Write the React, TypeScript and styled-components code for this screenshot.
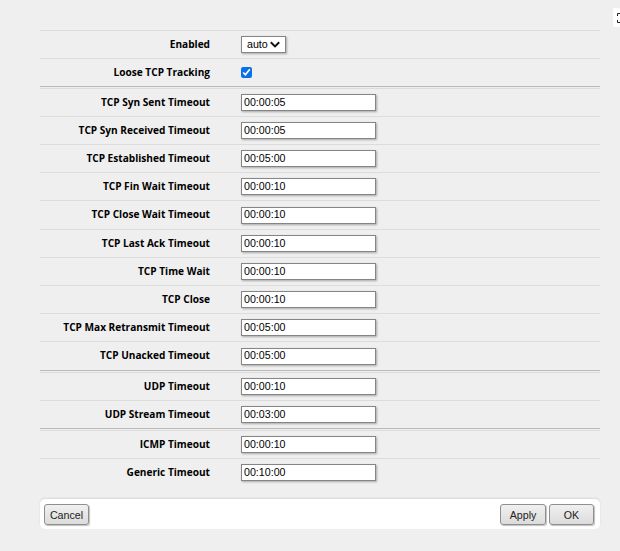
import React from "react";
import styled, { createGlobalStyle } from "styled-components";

const chevron = encodeURIComponent(
  '<svg xmlns="http://www.w3.org/2000/svg" width="10" height="7" viewBox="0 0 10 7"><path d="M.8 1.2L5 5.4l4.2-4.2" fill="none" stroke="#111" stroke-width="2"/></svg>'
);

const Global = createGlobalStyle`
  html, body { margin: 0; padding: 0; background: #efefef; }
  body { width: 620px; height: 551px; overflow: hidden; font-family: "Liberation Sans", Arial, sans-serif; }
`;
const Page = styled.div`
  position: relative;
  width: 620px;
  height: 551px;
  padding: 30px 20px 0 40px;
  box-sizing: border-box;
`;
const Separator = styled.div`
  height: 2px;
  box-sizing: border-box;
  border-top: 1px solid #b9b9b9;
`;
const Row = styled.div<{ $h: number }>`
  display: grid;
  grid-template-columns: 170px 1fr;
  column-gap: 31px;
  align-items: center;
  height: ${(p) => p.$h}px;
  box-sizing: border-box;
  border-top: 1px solid #dcdcdc;
`;
const Label = styled.label`
  text-align: right;
  font: bold 10.1px/12px "Open Sans", sans-serif;
  padding-bottom: 2px;
  color: #000;
`;
const TextInput = styled.input`
  display: block;
  width: 135px;
  height: 17px;
  box-sizing: border-box;
  border: 1px solid #858585;
  background: #fff;
  padding: 0 2px 2px;
  margin: 0;
  font: 10.67px "Liberation Sans", Arial, sans-serif;
  color: #000;
  box-shadow: 1px 1px 2px rgba(0,0,0,.3);
`;
const Select = styled.select`
  display: block;
  appearance: none;
  width: 45px;
  height: 17px;
  box-sizing: border-box;
  border: 1px solid #858585;
  border-radius: 0;
  background: #fff url("data:image/svg+xml,${chevron}") no-repeat right 5px center;
  font: 10.67px "Liberation Sans", Arial, sans-serif;
  color: #000;
  box-shadow: 1px 1px 2px rgba(0,0,0,.3);
  padding: 0 0 2px 5px;
  margin: 0;
`;
const Check = styled.input`
  display: block;
  width: 11px;
  height: 11px;
  margin: 0;
  accent-color: #0a6fe8;
`;
const Footer = styled.div`
  display: flex;
  align-items: center;
  gap: 3px;
  height: 30px;
  margin-top: 13px;
  padding: 0 6px 0 4px;
  background: #fff;
  border-radius: 5px;
  box-shadow: 0 -1px 2px rgba(0,0,0,.1);
`;
const Button = styled.button<{ $push?: boolean; $w: number }>`
  width: ${(p) => p.$w}px;
  height: 21px;
  ${(p) => (p.$push ? "margin-left: auto;" : "")}
  border: 1px solid #8f8f8f;
  border-radius: 3px;
  background: linear-gradient(#f0f0f0, #dcdcdc);
  box-shadow: 1px 1px 1px rgba(0,0,0,.25);
  font: 10.67px "Liberation Sans", Arial, sans-serif;
  color: #222;
  padding: 1px 0 0;
`;
const Corner = styled.div`
  position: absolute;
  left: 613px;
  top: 8px;
  width: 7px;
  height: 19px;
  background: #fff;
  border-radius: 2px 0 0 2px;
  overflow: hidden;
`;
const rows: [string, string, number, boolean?][] = [
  ["TCP Syn Sent Timeout", "00:00:05", 28, true],
  ["TCP Syn Received Timeout", "00:00:05", 28],
  ["TCP Established Timeout", "00:05:00", 28],
  ["TCP Fin Wait Timeout", "00:00:10", 28],
  ["TCP Close Wait Timeout", "00:00:10", 29],
  ["TCP Last Ack Timeout", "00:00:10", 28],
  ["TCP Time Wait", "00:00:10", 28],
  ["TCP Close", "00:00:10", 28],
  ["TCP Max Retransmit Timeout", "00:05:00", 28],
  ["TCP Unacked Timeout", "00:05:00", 29],
  ["UDP Timeout", "00:00:10", 28, true],
  ["UDP Stream Timeout", "00:03:00", 28],
  ["ICMP Timeout", "00:00:10", 28, true],
  ["Generic Timeout", "00:10:00", 28],
];
export default function App() {
  return (
    <Page>
      <Global />
      <Corner>
        <svg width="7" height="19" viewBox="0 0 7 19"><path d="M4.5 8V5.5H7M4.5 12v2.5H7" fill="none" stroke="#222" strokeWidth="1" /></svg>
      </Corner>
      <Row $h={28}>
        <Label>Enabled</Label>
        <div><Select defaultValue="auto"><option>auto</option></Select></div>
      </Row>
      <Row $h={28}>
        <Label>Loose TCP Tracking</Label>
        <div><Check type="checkbox" defaultChecked /></div>
      </Row>
      {rows.map(([l, v, h, s]) => (
        <React.Fragment key={l}>
          {s && <Separator />}
          <Row $h={h}>
            <Label>{l}</Label>
            <div><TextInput defaultValue={v} /></div>
          </Row>
        </React.Fragment>
      ))}
      <Footer>
        <Button $w={45}>Cancel</Button>
        <Button $push $w={46}>Apply</Button>
        <Button $w={45}>OK</Button>
      </Footer>
    </Page>
  );
}
